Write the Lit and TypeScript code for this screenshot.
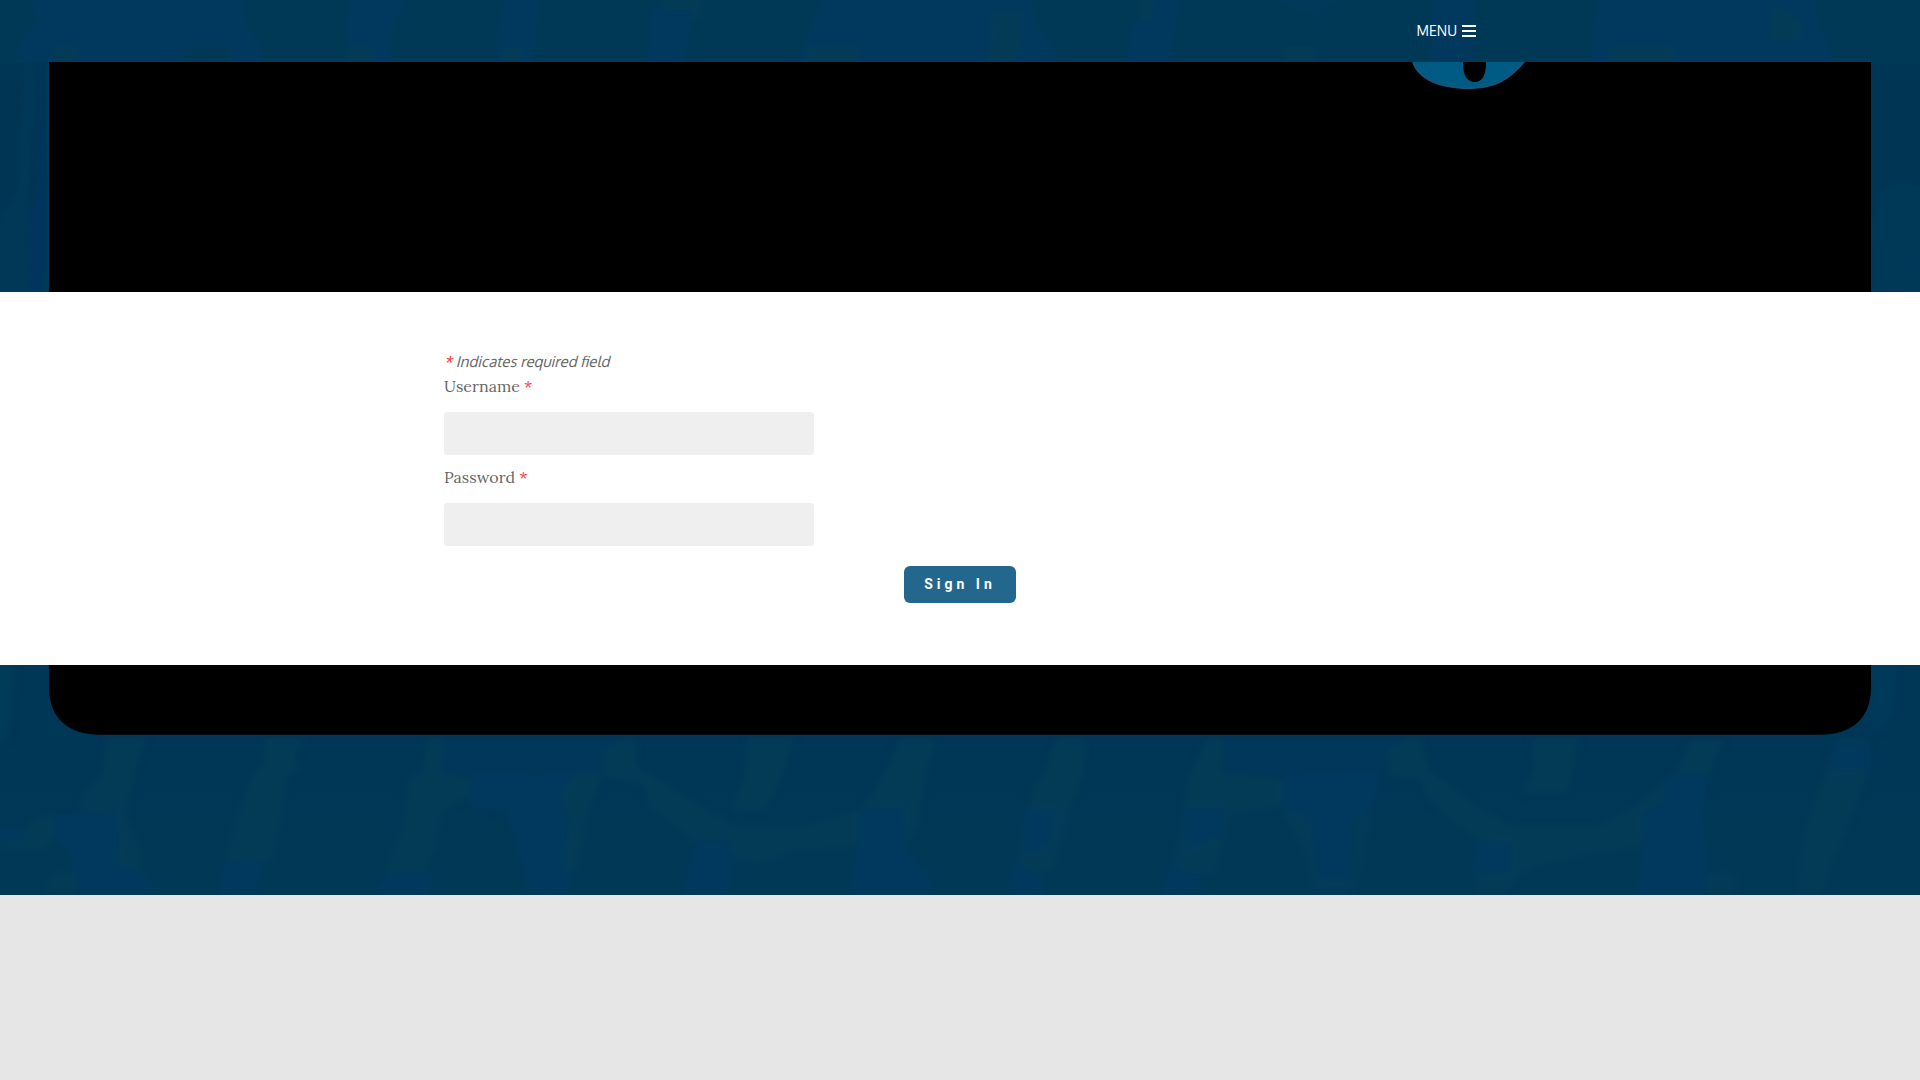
import { LitElement, html, css, svg } from "lit";
import { customElement } from "lit/decorators.js";

const GREEN = "#033b57";
const BLUE = "#01395e";

const swirlsLeft = svg`
  <path fill=${GREEN} d="M175 262H240L225 340 212 430 205 500 225 580 235 668 190 668 185 490 130 490 135 430 165 380Z"/>
  <path fill=${BLUE} d="M85 490H190L195 560 190 640 235 670 265 735H125L115 610 85 560Z"/>
  <path fill=${BLUE} d="M0 530L45 540 75 575 0 575Z"/>
  <path fill=${GREEN} d="M45 520L85 490 90 560 70 600 0 600 0 578 40 575Z"/>
  <path fill=${GREEN} d="M430 262H500L485 300V370H470L460 500 445 632 370 632 380 540 400 440 415 360 430 350Z"/>
  <path fill=${BLUE} d="M368 632H432L415 735H356Z"/>
  <path fill=${GREEN} d="M695 262H725L722 370 770 385 765 440 722 480 712 600 690 668 630 668 660 520 668 390 690 360Z"/>
  <path fill=${BLUE} d="M635 668H710L700 735H608Z"/>
  <path fill=${BLUE} fill-opacity=".55" d="M725 262H1020L985 310 975 370 770 375 722 365Z"/>
  <path fill=${BLUE} d="M770 375H970L930 400 920 500 945 590 925 735H865L850 620 825 485 765 470Z"/>
  <path fill=${GREEN} d="M940 370L985 370 960 490 945 660 920 660 930 500 915 440Z"/>
  <path fill=${GREEN} d="M985 300L1020 262H1040V350L1085 400 1110 430 1165 490 1200 532H1320L1400 480 1425 432 1450 350 1470 262H1530L1510 390 1500 520 1480 590 1400 590 1300 600 1240 640 1190 625 1190 570 1130 572 1100 520 1060 470 1050 400 985 380Z"/>
  <path fill=${BLUE} d="M1135 575H1190L1200 640 1190 735H1115L1125 650Z"/>
  <path fill=${BLUE} d="M1405 470L1475 470 1480 600 1510 660 1530 735H1385L1400 600Z"/>
  <path fill=${GREEN} d="M1220 262H1298L1280 370 1250 480 1195 480 1215 380Z"/>
  <path fill=${GREEN} d="M82 670H125V735H75Z"/>`;

const swirlsRight = svg`
  <path fill=${GREEN} d="M1725 262H1775L1770 370 1750 470 1720 660 1660 670 1665 570 1690 400 1705 370Z"/>
  <path fill=${BLUE} d="M1672 480H1725L1715 590 1672 610Z"/>
  <path fill=${BLUE} d="M1655 630L1680 660 1705 680V735H1645Z"/>
  <path fill=${GREEN} d="M1970 262H2000L1995 370 2095 385 2100 470 2010 490 1985 668 1915 668 1930 520 1940 390Z"/>
  <path fill=${BLUE} d="M1938 470H2000L1995 560 1935 600Z"/>
  <path fill=${BLUE} d="M1915 630L1940 670 1965 670 1955 735H1895Z"/>
  <path fill=${BLUE} fill-opacity=".55" d="M2000 262H2300L2265 310 2255 375 2000 370Z"/>
  <path fill=${BLUE} d="M2095 375H2255L2240 480 2200 530 2210 690H2150L2140 600 2095 480Z"/>
  <path fill=${GREEN} d="M2095 485L2140 500 2150 690H2210L2220 500 2240 490 2225 640 2205 735H2150L2130 600Z"/>
  <path fill=${BLUE} d="M2140 490H2210L2205 670H2155Z"/>
  <path fill=${GREEN} d="M2265 300L2300 262H2320L2335 360 2390 440 2430 490 2470 530H2610L2660 480 2710 410 2740 360 2760 270H2815L2790 380 2780 500 2680 590 2570 620 2520 640 2480 680 2460 735H2410L2420 570 2370 510 2330 440 2320 385 2270 380Z"/>
  <path fill=${BLUE} d="M2410 575H2470L2470 660 2455 675 2405 675Z"/>
  <path fill=${BLUE} d="M2725 370H2790L2780 500 2790 640 2790 735H2675L2685 560 2680 490 2715 450Z"/>
  <path fill=${GREEN} d="M2500 262H2580L2560 430H2485L2505 360Z"/>
  <path fill=${GREEN} d="M3000 262H3050L3055 360 3030 470 2995 620 2975 735H2935L2945 560 2970 430Z"/>
  <path fill=${BLUE} d="M2995 280H3055V360H2990Z"/>
  <path fill=${GREEN} d="M2790 670H2835V735H2785Z"/>`;

const headerArt = html`
  <svg class="art" viewBox="0 0 4704 186" preserveAspectRatio="none" aria-hidden="true">
    <defs>
      <filter id="soft-header" x="-5%" y="-20%" width="110%" height="140%" color-interpolation-filters="sRGB">
        <feGaussianBlur stdDeviation="6 6" />
      </filter>
    </defs>
    <rect width="4704" height="186" fill="#003956" />
    <g filter="url(#soft-header)">
      <g fill=${BLUE}>
        <path d="M65 -30H590L605 80 640 140V210H560V140H480L400 210H190V140H130V210H40V140L90 60Z" />
        <path d="M855 -30H1000L965 75 955 140V210H855L848 75Z" />
        <path d="M1240 -30H1325L1310 140 1290 210H1230L1215 110Z" />
        <path d="M1595 25L1700 30 1690 90 1670 210H1590Z" />
        <path d="M2020 -30H2520L2540 80 2585 140V210H1950L1980 100Z" />
        <path d="M2825 -30H2900L2880 80 2860 210H2765L2770 85Z" />
        <path fill-opacity=".5" d="M3080 -30H3300L3240 50 3190 40Z" />
        <path d="M3510 -30H3620L3605 210H3500Z" />
        <path d="M3920 -30H4440L4460 80 4500 210H3900V90Z" />
      </g>
      <g fill=${GREEN}>
        <path d="M130 140H190V210H130ZM850 140H910L920 210H850ZM1235 140H1275V210H1230ZM1620 -30H1730L1710 75 1690 30 1625 30Z" />
        <path d="M1980 140H2105V210H1970ZM2430 40H2505V120L2480 210H2425ZM2790 -30H2830L2820 60H2790ZM3145 140H3225V210H3145Z" />
        <path d="M3945 140H4100V210H3940ZM4345 20L4410 60V120H4340Z" />
      </g>
    </g>
  </svg>
`;

const topArt = html`
  <svg class="art" viewBox="0 62 1920 230" preserveAspectRatio="none" aria-hidden="true">
    <defs>
      <linearGradient id="side" x1="0" y1="0" x2="0" y2="1">
        <stop offset="0" stop-color="#003655" />
        <stop offset=".5" stop-color="#003554" />
        <stop offset="1" stop-color="#003a58" />
      </linearGradient>
      <filter id="soft-side" color-interpolation-filters="sRGB">
        <feGaussianBlur stdDeviation="2 5" />
      </filter>
    </defs>
    <rect y="62" width="1920" height="230" fill="url(#side)" />
    <g filter="url(#soft-side)">
      <path fill="#013858" d="M25 50H32V130L28 200 20 300H-8V240L18 190Z" />
      <path fill="#01355f" d="M39 50H43V120L46 150V230L42 300H29V220L38 200Z" />
      <path fill="#003858" d="M1880 190L1900 180 1930 190V240L1904 300H1871V230Z" />
    </g>
    <path fill="#003b55" d="M46 62H49V292H46Z" />
    <rect x="49" y="62" width="1822" height="230" fill="#000" />
    <path fill="#17557c" d="M1412 62C1418 80 1440 89 1468 89C1494 89 1509 81 1525 62Z" />
    <path fill="#005b84" d="M1414 62C1420 79 1441 87 1468 87C1493 87 1507 80 1522 62Z" />
    <path fill="#000" d="M1463 62C1463 76 1467 82 1475 82C1482 82 1486 76 1486 62Z" />
  </svg>
`;

const bottomArt = html`
  <svg class="art" viewBox="0 45 3136 690" preserveAspectRatio="none" aria-hidden="true">
    <defs>
      <linearGradient id="deep" x1="0" y1="0" x2="0" y2="1">
        <stop offset="0" stop-color="#003756" />
        <stop offset=".35" stop-color="#003656" />
        <stop offset=".7" stop-color="#003856" />
        <stop offset="1" stop-color="#003956" />
      </linearGradient>
      <filter id="soft-deep" x="-5%" y="-5%" width="110%" height="110%" color-interpolation-filters="sRGB">
        <feGaussianBlur stdDeviation="6 9" />
      </filter>
    </defs>
    <rect y="45" width="3136" height="690" fill="url(#deep)" />
    <g filter="url(#soft-deep)">
      <path fill="#003b58" d="M-20 20H28L22 180 12 275 -20 290Z" />
      <path fill="#003a5a" d="M3056 20H3100L3095 180 3070 250 3056 240Z" />
      ${swirlsLeft}${swirlsRight}
    </g>
    <path fill="#192f4b" d="M165 250H2971V259H165Z" />
    <path fill="#000" d="M80 45H3056V110C3056 200 3028 254 2971 254H165C108 254 80 200 80 110Z" />
  </svg>
`;

@customElement("app-root")
export class AppRoot extends LitElement {
  static styles = css`
    :host {
      display: flex;
      flex-direction: column;
      min-height: 100vh;
      background: #e6e6e6;
      color: #666;
      font-family: Oxygen, "Open Sans", sans-serif;
    }
    .bar,
    .banner {
      display: grid;
    }
    .bar > *,
    .banner > * {
      grid-area: 1 / 1;
    }
    .bar {
      height: 62px;
    }
    .banner {
      height: 230px;
    }
    .art {
      display: block;
      width: 100%;
      height: 100%;
      min-height: 0;
    }
    .container {
      box-sizing: border-box;
      width: 100%;
      max-width: 1032px;
      margin: 0 auto;
    }
    .nav {
      z-index: 1;
      display: flex;
      align-items: center;
      justify-content: flex-end;
    }
    .menu {
      display: flex;
      align-items: center;
      gap: 5px;
      padding: 0;
      border: 0;
      background: none;
      color: #fff;
      font: 400 14px/20px Oxygen, "Open Sans", sans-serif;
      cursor: pointer;
    }
    .burger {
      display: block;
      width: 14px;
      height: 12px;
    }
    .panel {
      background: #fff;
      padding: 58px 0 62px;
    }
    .form {
      display: flex;
      flex-direction: column;
    }
    .note {
      margin: 0;
      font-size: 15px;
      font-style: italic;
      line-height: 24px;
    }
    .star {
      color: #f33;
    }
    .field {
      display: flex;
      flex-direction: column;
      gap: 14px;
      margin-bottom: 10px;
    }
    .label {
      font: 16px/24px Lora, "Liberation Serif", serif;
    }
    .input {
      box-sizing: border-box;
      width: 370px;
      max-width: 100%;
      height: 43px;
      padding: 10px;
      border: 0;
      border-radius: 3px;
      background: #efefef;
      color: inherit;
      font: inherit;
    }
    .submit {
      align-self: center;
      margin-top: 10px;
      padding: 0 20px;
      border: 0;
      border-radius: 6px;
      background: #24678d;
      color: #fff;
      font: 700 14px/37px Roboto, sans-serif;
      letter-spacing: 4px;
      cursor: pointer;
    }
  `;

  render() {
    return html`
      <header class="bar">
        ${headerArt}
        <nav class="container nav">
          <button class="menu" type="button">
            MENU
            <svg class="burger" viewBox="0 0 14 12" aria-hidden="true">
              <path fill="#fff" d="M0 0H14V2H0ZM0 5H14V7H0ZM0 10H14V12H0Z" />
            </svg>
          </button>
        </nav>
      </header>
      <main>
        <div class="banner">${topArt}</div>
        <section class="panel">
          <form class="container form" @submit=${(e: Event) => e.preventDefault()}>
            <p class="note"><span class="star">*</span> Indicates required field</p>
            <div class="field">
              <label class="label" for="username">Username <span class="star">*</span></label>
              <input class="input" id="username" type="text" autocomplete="username" />
            </div>
            <div class="field">
              <label class="label" for="password">Password <span class="star">*</span></label>
              <input class="input" id="password" type="password" autocomplete="current-password" />
            </div>
            <button class="submit" type="submit">Sign In</button>
          </form>
        </section>
        <div class="banner">${bottomArt}</div>
      </main>
    `;
  }
}
